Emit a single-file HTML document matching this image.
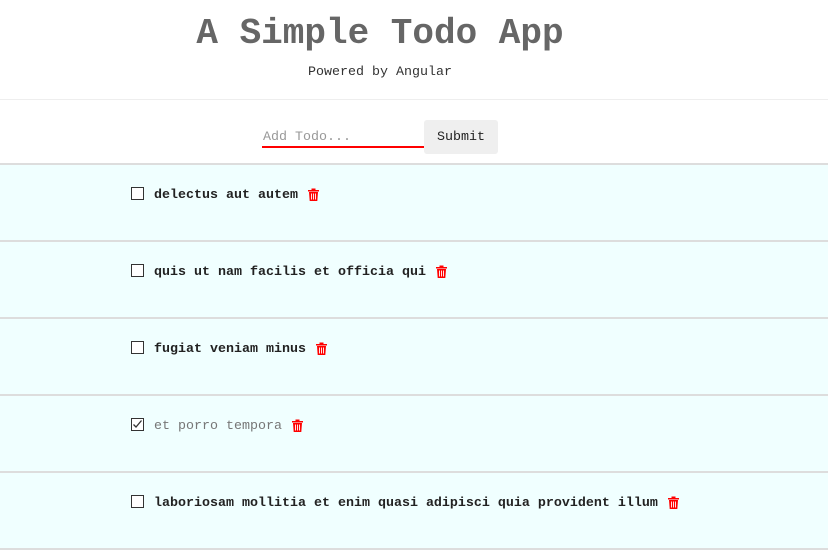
<!DOCTYPE html>
<html><head><meta charset="utf-8"><style>
*{margin:0;padding:0;box-sizing:border-box}
body{width:828px;height:553px;background:#fff;font-family:"Courier New","Liberation Mono",monospace;position:relative;overflow:hidden}
.t{position:absolute;white-space:nowrap}
h1{position:absolute;left:0;width:760px;top:13px;text-align:center;font-size:36px;font-weight:bold;color:#666;line-height:42px}
.sub{position:absolute;left:0;width:760px;top:65px;text-align:center;font-size:13.33px;color:#333}
.hr{position:absolute;left:0;width:828px;background:#ddd}
.row{position:absolute;left:0;width:828px;height:75px;background:#f0ffff}
.cb{position:absolute;left:131px;width:13px;height:13px;border:1.5px solid #333;background:#fff}
.txt{position:absolute;left:154px;font-size:13.33px;font-weight:bold;color:#222;white-space:nowrap;line-height:16px}
.done{font-weight:normal;color:#777}
svg.tr{position:absolute}
</style></head><body>
<h1>A Simple Todo App</h1>
<div class="sub">Powered by Angular</div>
<div class="hr" style="top:99px;height:1px;background:#eee"></div>
<div class="t" style="left:263px;top:130px;font-size:13.33px;color:#999">Add Todo...</div>
<div style="position:absolute;left:262px;top:146px;width:162px;height:2px;background:#f00"></div>
<div style="position:absolute;left:424px;top:120px;width:74px;height:34px;background:#efefef;border-radius:3px;font-size:13.33px;color:#222;text-align:center;line-height:36px">Submit</div>

<div class="hr" style="top:163px;height:2px"></div>
<div class="row" style="top:165px"></div>
<div class="hr" style="top:240px;height:2px"></div>
<div class="row" style="top:242px"></div>
<div class="hr" style="top:317px;height:2px"></div>
<div class="row" style="top:319px"></div>
<div class="hr" style="top:394px;height:2px"></div>
<div class="row" style="top:396px"></div>
<div class="hr" style="top:471px;height:2px"></div>
<div class="row" style="top:473px"></div>
<div class="hr" style="top:548px;height:2px"></div>

<div class="cb" style="top:187px"></div><div class="txt" style="top:188px">delectus aut autem</div>
<div class="cb" style="top:264px"></div><div class="txt" style="top:265px">quis ut nam facilis et officia qui</div>
<div class="cb" style="top:341px"></div><div class="txt" style="top:342px">fugiat veniam minus</div>
<div class="cb" style="top:418px"><svg width="11" height="11" style="position:absolute;left:0;top:0"><path d="M1.5 5.5 L4 8 L9.5 1.5" stroke="#333" stroke-width="1.3" fill="none"/></svg></div><div class="txt done" style="top:419px">et porro tempora</div>
<div class="cb" style="top:495px"></div><div class="txt" style="top:496px">laboriosam mollitia et enim quasi adipisci quia provident illum</div>

<svg class="tr" style="left:308px;top:188px" width="11" height="13" viewBox="0 0 11 13"><path d="M3.5 0.5h4v1.5h3.5v1.5h-11v-1.5h3.5z M1 4h9l-0.7 9h-7.6z" fill="#f00"/><path d="M3.5 5.5v6M5.5 5.5v6M7.5 5.5v6" stroke="#fff" stroke-width="0.9"/></svg>
<svg class="tr" style="left:436px;top:265px" width="11" height="13" viewBox="0 0 11 13"><path d="M3.5 0.5h4v1.5h3.5v1.5h-11v-1.5h3.5z M1 4h9l-0.7 9h-7.6z" fill="#f00"/><path d="M3.5 5.5v6M5.5 5.5v6M7.5 5.5v6" stroke="#fff" stroke-width="0.9"/></svg>
<svg class="tr" style="left:316px;top:342px" width="11" height="13" viewBox="0 0 11 13"><path d="M3.5 0.5h4v1.5h3.5v1.5h-11v-1.5h3.5z M1 4h9l-0.7 9h-7.6z" fill="#f00"/><path d="M3.5 5.5v6M5.5 5.5v6M7.5 5.5v6" stroke="#fff" stroke-width="0.9"/></svg>
<svg class="tr" style="left:292px;top:419px" width="11" height="13" viewBox="0 0 11 13"><path d="M3.5 0.5h4v1.5h3.5v1.5h-11v-1.5h3.5z M1 4h9l-0.7 9h-7.6z" fill="#f00"/><path d="M3.5 5.5v6M5.5 5.5v6M7.5 5.5v6" stroke="#fff" stroke-width="0.9"/></svg>
<svg class="tr" style="left:668px;top:496px" width="11" height="13" viewBox="0 0 11 13"><path d="M3.5 0.5h4v1.5h3.5v1.5h-11v-1.5h3.5z M1 4h9l-0.7 9h-7.6z" fill="#f00"/><path d="M3.5 5.5v6M5.5 5.5v6M7.5 5.5v6" stroke="#fff" stroke-width="0.9"/></svg>
</body></html>
